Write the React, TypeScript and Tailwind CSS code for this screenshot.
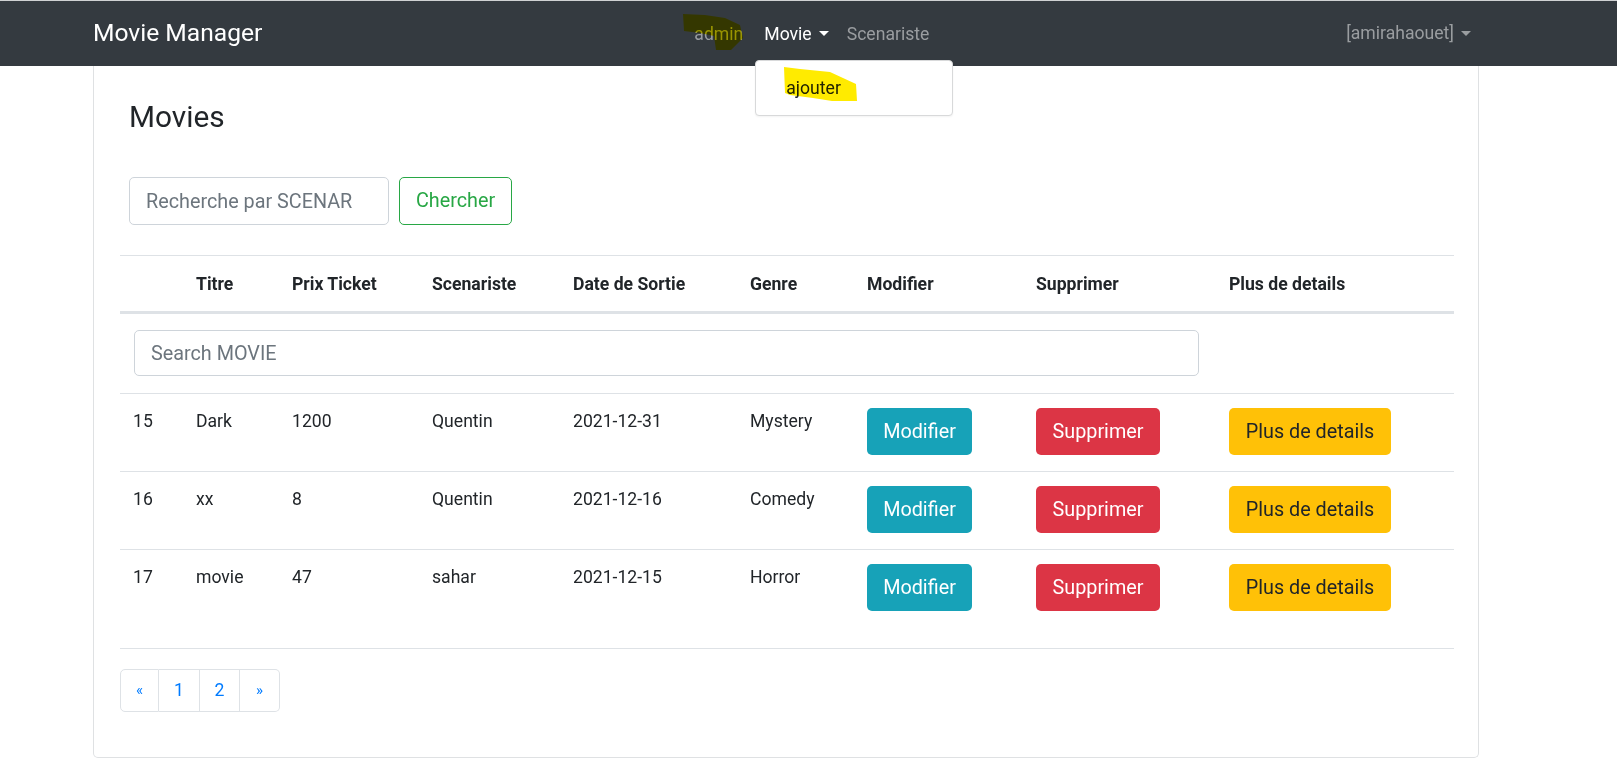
import React from 'react'

type Movie = {
    id: number
    titre: string
    prix: string
    scenariste: string
    date: string
    genre: string
}

const movies: Movie[] = [
    { id: 15, titre: 'Dark', prix: '1200', scenariste: 'Quentin', date: '2021-12-31', genre: 'Mystery' },
    { id: 16, titre: 'xx', prix: '8', scenariste: 'Quentin', date: '2021-12-16', genre: 'Comedy' },
    { id: 17, titre: 'movie', prix: '47', scenariste: 'sahar', date: '2021-12-15', genre: 'Horror' },
]

const colWidths = [63, 96, 140, 141, 177, 117, 169, 193, 238]
const headers = ['', 'Titre', 'Prix Ticket', 'Scenariste', 'Date de Sortie', 'Genre', 'Modifier', 'Supprimer', 'Plus de details']

function Caret({ className }: { className: string }) {
    return (
        <span className={`ml-[7px] inline-block h-0 w-0 border-x-[5px] border-t-[5px] border-x-transparent align-middle ${className}`} />
    )
}

function Navbar() {
    return (
        <nav className="relative z-10 h-[66px] border-t border-[#cfd1d3] bg-[#343a40]">
            <div className="ml-[93px] flex h-full w-[1386px] items-center">
                <a className="text-[24.6px] leading-none text-white">Movie Manager</a>

                {/* center links */}
                <div className="relative ml-[423px] flex items-center text-[17.6px] leading-[26px]">
                    <a className="px-[9px] text-[#9a9da0]">admin</a>
                    <div className="relative ml-[3px]">
                        <a className="flex items-center px-[9px] text-white">
                            Movie
                            <Caret className="border-t-white" />
                        </a>
                        {/* open dropdown */}
                        <div className="absolute left-0 top-[39px] w-[198px] rounded-[4px] border border-[#d8d9da] bg-white py-[9.8px] shadow-[0_1px_2px_rgba(0,0,0,0.05)]">
                            <div className="px-[30px] py-[4.4px] text-[17.6px] leading-[26px] text-[#212529]">ajouter</div>
                        </div>
                    </div>
                    <a className="px-[9px] text-[#9a9da0]">Scenariste</a>
                </div>

                <a className="ml-auto flex items-center pl-[9px] pr-[8px] text-[17.6px] text-[#9a9da0]">
                    [amirahaouet]
                    <Caret className="border-t-[#9a9da0]" />
                </a>
            </div>
        </nav>
    )
}

// highlighter marks drawn over the screenshot (multiply blend like a marker)
function Highlights() {
    return (
        <svg className="pointer-events-none absolute left-0 top-0 z-20 mix-blend-multiply" width="1617" height="130">
            <path d="M683 14 L705 15 L725 18 L740 25 L743 38 L731 50 L716 50 L714 36 L700 33 L684 31 Z" fill="#fff200" />
            <path d="M784 67 L800 69 L830 72 L843 78 L856 84 L857 101 L832 101 L813 98 L790 95 L785 93 Z" fill="#ffeb00" />
        </svg>
    )
}

function Btn({ color, width, children }: { color: string; width: string; children: React.ReactNode }) {
    return (
        <button className={`h-[47px] rounded-[5px] text-center text-[19.8px] leading-none ${color} ${width}`}>{children}</button>
    )
}

const cell = 'px-[13px] pt-[14px] pb-[16px]'

export default function App() {
    return (
        <div className="relative min-h-[761px] bg-white text-[#212529]" style={{ fontFamily: 'Roboto, "Liberation Sans", sans-serif' }}>
            <Navbar />
            <Highlights />

            {/* Card */}
            <div className="ml-[93px] h-[692px] w-[1386px] rounded-b-[5px] border-x border-b border-[#dfe1e3] px-[26px]">
                <div className="pl-[9px]">
                    <h3 className="pt-[32px] text-[29.8px] leading-[37px] font-normal">Movies</h3>

                    <div className="mt-[42px] flex gap-[10px]">
                        <input
                            placeholder="Recherche par SCENAR"
                            className="h-[48px] w-[260px] rounded-[5px] border border-[#ced4da] px-[16px] text-[19.8px] placeholder:text-[#6c757d] outline-none"
                        />
                        <button className="h-[48px] w-[113px] rounded-[5px] border border-[#28a745] text-[19.8px] text-[#28a745]">Chercher</button>
                    </div>
                </div>

                <table className="mt-[30px] w-[1334px] table-fixed border-collapse text-left text-[17.6px] leading-[26px]">
                    <colgroup>
                        {colWidths.map((w, i) => (
                            <col key={i} style={{ width: w }} />
                        ))}
                    </colgroup>
                    <thead>
                        <tr>
                            {headers.map((h, i) => (
                                <th key={i} className="border-t border-b-[3px] border-[#dee2e6] px-[13px] pt-[15px] pb-[14px] font-bold">
                                    {h}
                                </th>
                            ))}
                        </tr>
                    </thead>
                    <tbody>
                        <tr>
                            <td colSpan={8} className="pt-[16px] pb-[17px] pl-[14px] pr-[17px]">
                                <input
                                    placeholder="Search MOVIE"
                                    className="h-[46px] w-full rounded-[5px] border border-[#ced4da] px-[16px] text-[19.8px] placeholder:text-[#6c757d] outline-none"
                                />
                            </td>
                            <td />
                        </tr>
                        {movies.map((m) => (
                            <tr key={m.id} className="border-t border-[#dee2e6] align-top">
                                <td className={cell}>{m.id}</td>
                                <td className={cell}>{m.titre}</td>
                                <td className={cell}>{m.prix}</td>
                                <td className={cell}>{m.scenariste}</td>
                                <td className={cell}>{m.date}</td>
                                <td className={cell}>{m.genre}</td>
                                <td className={cell}>
                                    <Btn color="bg-[#17a2b8] text-white" width="w-[105px]">Modifier</Btn>
                                </td>
                                <td className={cell}>
                                    <Btn color="bg-[#dc3545] text-white" width="w-[124px]">Supprimer</Btn>
                                </td>
                                <td className={cell}>
                                    <Btn color="bg-[#ffc107] text-[#212529]" width="w-[162px]">Plus de details</Btn>
                                </td>
                            </tr>
                        ))}
                    </tbody>
                </table>

                <div className="mt-[21px] w-[1334px] border-t border-[#dee2e6]" />

                {/* Pagination */}
                <ul className="mt-[20px] flex h-[43px] w-fit text-[17.6px] text-[#007bff]">
                    <li className="flex w-[39px] items-center justify-center rounded-l-[5px] border border-[#dee2e6] text-[15px]">«</li>
                    <li className="flex w-[41px] items-center justify-center border-y border-r border-[#dee2e6]">1</li>
                    <li className="flex w-[40px] items-center justify-center border-y border-r border-[#dee2e6]">2</li>
                    <li className="flex w-[40px] items-center justify-center rounded-r-[5px] border-y border-r border-[#dee2e6] text-[15px]">»</li>
                </ul>
            </div>
        </div>
    )
}
